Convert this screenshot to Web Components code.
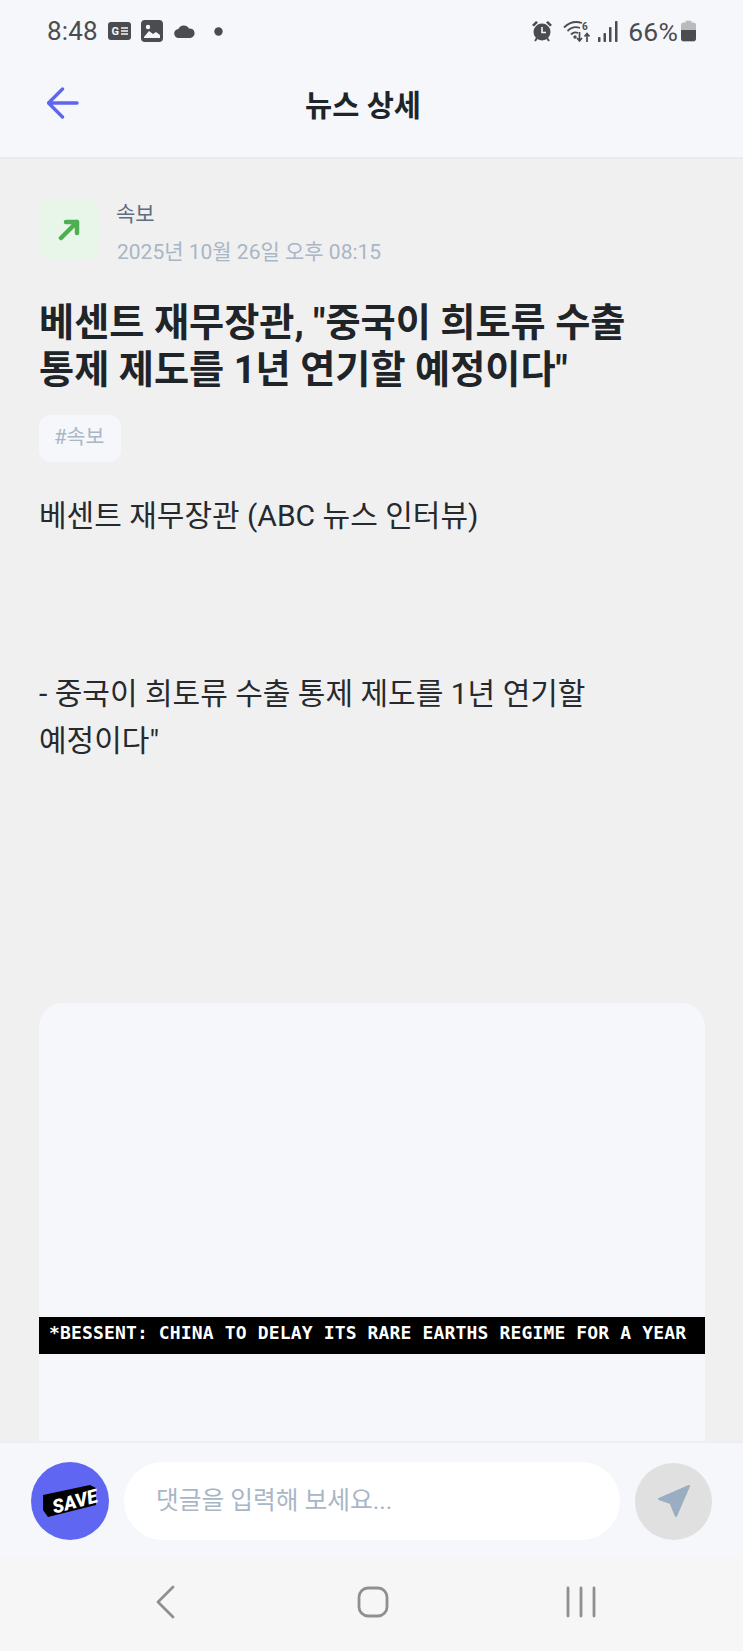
<!DOCTYPE html>
<html lang="ko">
<head>
<meta charset="utf-8">
<title>뉴스 상세</title>
<style>
html,body{margin:0;padding:0;background:#f0f0f0;}
body{font-family:Roboto,"Noto Sans CJK KR",sans-serif;width:743px;height:1651px;overflow:hidden;}
</style>
</head>
<body>
<news-app>
    <status-bar slot="status"></status-bar>
    <app-header slot="header" title="뉴스 상세"></app-header>
    <news-article slot="content"
        category="속보"
        date="2025년 10월 26일 오후 08:15"
        headline="베센트 재무장관, &quot;중국이 희토류 수출 통제 제도를 1년 연기할 예정이다&quot;"
        tag="#속보">
        <p>베센트 재무장관 (ABC 뉴스 인터뷰)</p>
        <p class="second">- 중국이 희토류 수출 통제 제도를 1년 연기할 예정이다"</p>
    </news-article>
    <comment-bar slot="comment"></comment-bar>
    <nav-bar slot="nav"></nav-bar>
</news-app>

<script>
customElements.define("news-app",class NewsApp extends HTMLElement {
    constructor(){
        super();
        this.shadow = this.attachShadow({mode:'open'});
        this.shadow.innerHTML = `<style>
            :host {
                display:flex;
                flex-direction:column;
                width:743px;
                height:1651px;
                overflow:hidden;
            }
            .content {
                flex:1;
                min-height:0;
                overflow:hidden;
            }
        </style>
        <slot name="status"></slot>
        <slot name="header"></slot>
        <div class="content"><slot name="content"></slot></div>
        <slot name="comment"></slot>
        <slot name="nav"></slot>`;
    }
});

customElements.define("status-bar",class StatusBar extends HTMLElement {
    constructor(){
        super();
        this.shadow = this.attachShadow({mode:'open'});
        this.shadow.innerHTML = `<style>
            :host {
                display:flex;
                align-items:center;
                justify-content:space-between;
                height:62px;
                padding:0 47px 0 47px;
                background:#f5f7fb;
                color:#4a4c50;
                font-family:Roboto,sans-serif;
                font-size:26px;
            }
            .side { display:flex; align-items:center; }
            svg { display:block; fill:#4a4c50; }
            .time { margin-right:10px; letter-spacing:.2px; }
            .pct { margin:0 3px 0 3px; font-size:26.5px; letter-spacing:.2px; }
        </style>
        <div class="side">
            <span class="time">8:48</span>
            <svg width="23" height="18" viewBox="0 0 23 18" style="margin-right:10px"><rect width="23" height="18" rx="3"/><text x="3.500" y="13" font-size="11" font-weight="700" font-family="Roboto,sans-serif" fill="#f5f7fb">G</text><path d="M13 6h7M13 9h7M13 12h7" stroke="#f5f7fb" stroke-width="1.500"/></svg>
            <svg width="22" height="22" viewBox="0 0 22 22" style="margin-right:11px"><rect width="22" height="22" rx="4"/><path d="M3 17l5-6 4 3 3-2 4 3v3H3z" fill="#f5f7fb"/><circle cx="7" cy="7" r="2.200" fill="#f5f7fb"/></svg>
            <svg width="21" height="14" viewBox="0 0 21 14" style="margin-right:19px"><path d="M5 14a4.500 4.500 0 0 1-.6-9A6 6 0 0 1 15 4.500 4.600 4.600 0 0 1 16.500 14z"/></svg>
            <svg width="9" height="9" viewBox="0 0 9 9"><circle cx="4.500" cy="4.500" r="4.200"/></svg>
        </div>
        <div class="side">
            <svg width="22" height="22" viewBox="0 0 22 22" style="margin-right:10px"><path d="M1 5l4-4 2 1.500-4 4zM21 5l-4-4-2 1.500 4 4z"/><circle cx="11" cy="12" r="8.500"/><path d="M11 7v5.500h4" fill="none" stroke="#f5f7fb" stroke-width="1.600"/><path d="M4 21l2-3M18 21l-2-3" stroke="#4a4c50" stroke-width="2"/></svg>
            <svg width="31" height="23" viewBox="0 0 31 23" style="margin-right:4px"><g fill="none" stroke="#4a4c50" stroke-width="1.800"><path d="M1 7.500C6 2.500 13 1 19 3"/><path d="M4.500 11C8 7.500 13 6.500 17 8"/><path d="M8 14.500c2-2 5-2.500 7-1.500"/></g><circle cx="12" cy="17" r="1.700"/><text x="19" y="9.500" font-size="10" font-family="Roboto,sans-serif" font-weight="700" fill="#4a4c50">6</text><path d="M16.500 12v8M14 18l2.500 3 2.500-3M24 22v-8M21.500 16.500L24 13.500l2.500 3" fill="none" stroke="#4a4c50" stroke-width="1.700"/></svg>
            <svg width="20" height="21" viewBox="0 0 20 21" style="margin-right:7px"><rect x="0" y="16" width="2.500" height="5" rx=".8"/><rect x="5.500" y="12" width="2.500" height="9" rx=".8"/><rect x="11" y="6" width="2.500" height="15" rx=".8"/><rect x="17" y="0" width="2.500" height="21" rx=".8"/></svg>
            <span class="pct">66%</span>
            <svg width="15" height="22" viewBox="0 0 16 22"><path d="M5 0h6v2h2a3 3 0 0 1 3 3v14a3 3 0 0 1-3 3H3a3 3 0 0 1-3-3V5a3 3 0 0 1 3-3h2z" fill="#b9babd"/><path d="M0 10h16v9a3 3 0 0 1-3 3H3a3 3 0 0 1-3-3z"/></svg>
        </div>`;
    }
});

customElements.define("app-header",class AppHeader extends HTMLElement {
    constructor(){
        super();
        this.shadow = this.attachShadow({mode:'open'});
        this.shadow.innerHTML = `<style>
            :host {
                display:grid;
                grid-template-columns:1fr auto 1fr;
                align-items:center;
                padding:0 64px 14px 47px;
                background:#f5f7fb;
                border-bottom:2px solid #e8ebef;
                box-sizing:border-box;
                height:97px;
            }
            svg { display:block; }
            h1 {
                margin:0;
                font:700 29.500px Roboto,"Noto Sans CJK KR",sans-serif;
                color:#1f2429;
            }
        </style>
        <svg width="32" height="32" viewBox="0 0 32 32" fill="none" stroke="#5f66ee" stroke-width="3.400" stroke-linecap="round" stroke-linejoin="round"><path d="M30 16H2M15.500 2 1.500 16l14 14"/></svg>
        <h1></h1>
        <span></span>`;
        this.shadow.querySelector("h1").textContent = this.getAttribute("title");
    }
});

customElements.define("news-article",class NewsArticle extends HTMLElement {
    constructor(){
        super();
        this.shadow = this.attachShadow({mode:'open'});
        this.shadow.innerHTML = `<style>
            :host {
                display:block;
                padding:41px 38px 0 39px;
                background:#f0f0f0;
                font-family:Roboto,"Noto Sans CJK KR",sans-serif;
                word-break:keep-all;
            }
            .meta { display:flex; gap:18px; align-items:flex-start; }
            .avatar {
                width:60px;
                height:60px;
                border-radius:12px;
                background:#e8f5e9;
                display:flex;
                align-items:center;
                justify-content:center;
            }
            .category { font-size:21px; line-height:24px; color:#5c6e80; margin:2px 0 0 -1px; }
            .date { font-size:21px; line-height:26px; color:#a9b6c6; margin-top:13px; }
            h2 {
                margin:35px 0 0;
                max-width:640px;
                font-size:38.200px;
                line-height:47px;
                font-weight:700;
                color:#1f2429;
            }
            .tag {
                display:inline-block;
                margin-top:21px;
                padding:0 17px 0 15px;
                height:47px;
                line-height:45px;
                border-radius:12px;
                background:#f5f7fb;
                color:#a9b6c6;
                font-size:20.500px;
            }
            .body {
                margin-top:30px;
                font-size:30px;
                line-height:47px;
                color:#26292d;
            }
            ::slotted(p) { margin:0; }
            ::slotted(p.second) { margin-top:131px; }
            .picture {
                margin-top:239px;
                height:600px;
                border-radius:24px 24px 0 0;
                background:#f5f7fb;
                display:flex;
                flex-direction:column;
                padding-top:314px;
                box-sizing:border-box;
            }
            .band {
                height:37px;
                background:#000;
                color:#fff;
                font:700 18px/32px "DejaVu Sans Mono","Liberation Mono",monospace;
                padding-left:10px;
                white-space:nowrap;
                overflow:hidden;
                letter-spacing:.15px;
            }
        </style>
        <div class="meta">
            <div class="avatar">
                <svg width="22" height="22" viewBox="0 0 22 22" fill="none" stroke="#4caf50" stroke-width="4.500" stroke-linecap="round" stroke-linejoin="round"><path d="M3 19 19 3M8 3h11v11"/></svg>
            </div>
            <div>
                <div class="category"></div>
                <div class="date"></div>
            </div>
        </div>
        <h2></h2>
        <div class="tag"></div>
        <div class="body"><slot></slot></div>
        <div class="picture">
            <div class="band">*BESSENT: CHINA TO DELAY ITS RARE EARTHS REGIME FOR A YEAR</div>
        </div>`;
        this.shadow.querySelector(".category").textContent = this.getAttribute("category");
        this.shadow.querySelector(".date").textContent = this.getAttribute("date");
        this.shadow.querySelector("h2").textContent = this.getAttribute("headline");
        this.shadow.querySelector(".tag").textContent = this.getAttribute("tag");
    }
});

customElements.define("comment-bar",class CommentBar extends HTMLElement {
    constructor(){
        super();
        this.shadow = this.attachShadow({mode:'open'});
        this.shadow.innerHTML = `<style>
            :host {
                display:flex;
                align-items:center;
                gap:15px;
                height:116px;
                box-sizing:border-box;
                padding:2px 31px 0;
                background:#f5f7fb;
                border-top:2px solid #eceef2;
                font-family:Roboto,"Noto Sans CJK KR",sans-serif;
            }
            .save {
                position:relative;
                flex:none;
                width:78px;
                height:78px;
                border-radius:50%;
                background:#5f66f2;
            }
            .save svg { position:absolute; left:12px; top:23px; }
            .save span {
                position:absolute;
                left:21px;
                top:29px;
                font:italic 900 19px/22px Roboto,sans-serif;
                color:#fff;
                transform:rotate(-15deg);
            }
            .input {
                flex:1;
                height:78px;
                line-height:78px;
                border-radius:39px;
                background:#fff;
                padding-left:32px;
                color:#a9b6c6;
                font-size:24.700px;
            }
            .send {
                flex:none;
                width:77px;
                height:77px;
                border-radius:50%;
                background:#e0e0e0;
                display:flex;
                align-items:center;
                justify-content:center;
            }
        </style>
        <div class="save">
            <svg width="54" height="33" viewBox="0 0 54 33"><path d="M0 10 47 0l6 3v17L5 32l-5-7z" fill="#000"/></svg>
            <span>SAVE</span>
        </div>
        <div class="input">댓글을 입력해 보세요...</div>
        <div class="send">
            <svg width="34" height="34" viewBox="0 0 34 34"><path d="M32 2 2 15l11.500 4L19 32z" fill="#9aaec2" stroke="#9aaec2" stroke-width="2" stroke-linejoin="round"/></svg>
        </div>`;
    }
});

customElements.define("nav-bar",class NavBar extends HTMLElement {
    constructor(){
        super();
        this.shadow = this.attachShadow({mode:'open'});
        this.shadow.innerHTML = `<style>
            :host {
                display:flex;
                align-items:flex-start;
                height:94px;
                box-sizing:border-box;
                padding:28px 0 0 154px;
                background:#f6f6f6;
            }
            svg { display:block; fill:none; stroke:#8f8f8f; stroke-width:2.800; stroke-linecap:round; stroke-linejoin:round; }
        </style>
        <svg width="22" height="34" viewBox="0 0 22 34" style="margin-right:179.500px"><path d="M19 2 4 17l15 15"/></svg>
        <svg width="34" height="34" viewBox="0 0 34 34" style="margin-right:175.500px"><rect x="3" y="3" width="28" height="28" rx="9"/></svg>
        <svg width="32" height="34" viewBox="0 0 32 34"><path d="M3 3v28M16 3v28M29 3v28"/></svg>`;
    }
});
</script>
</body>
</html>
